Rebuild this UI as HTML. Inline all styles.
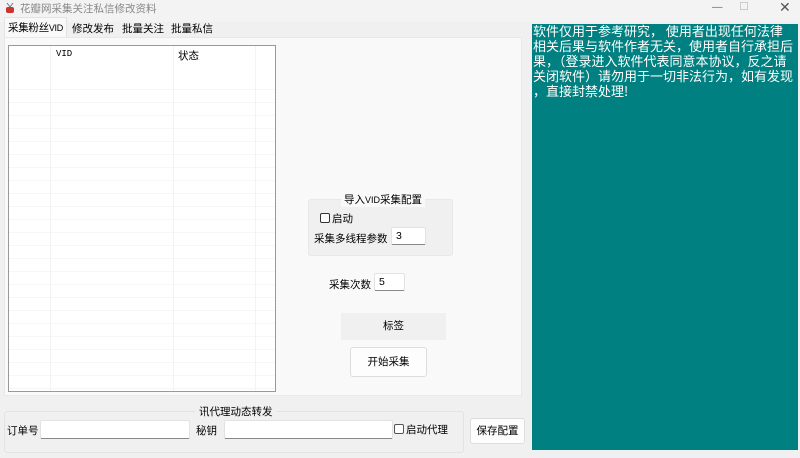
<!DOCTYPE html><html><head><meta charset="utf-8"><style>
*{margin:0;padding:0;box-sizing:border-box}
body{width:800px;height:458px;background:#f0f0f0;position:relative;overflow:hidden;font-family:"Liberation Sans","Noto Sans CJK SC",sans-serif;font-size:10.5px;color:#000}
.a{position:absolute;white-space:nowrap}
.inp{position:absolute;background:#fff;border:1px solid #e2e2e2;border-bottom:1px solid #888;border-radius:2px;padding-left:4px;font-size:10.5px;line-height:16px}
.btn{position:absolute;background:#fdfdfd;border:1px solid #ddd;border-radius:3px;text-align:center}
.cb{display:inline-block;width:10px;height:10px;border:1px solid #333;border-radius:2px;vertical-align:-1px;margin-right:2px;background:#fff}
.t{color:#fff;font-size:13px;line-height:15px;letter-spacing:0;font-family:'Noto Sans CJK SC','WenQuanYi Zen Hei',sans-serif}
</style></head><body>
<div class="a" style="left:0;top:0;width:800px;height:22px;background:#f3f3f3"></div>
<div class="a" style="left:5px;top:2px;width:10px;height:12px"><svg width="10" height="12"><path d="M2 1 L5 5 L8 1" stroke="#777" fill="none"/><rect x="1" y="5" width="8" height="6" rx="2" fill="#c33"/></svg></div>
<div class="a" style="left:20px;top:1px;color:#888;font-size:10.5px">花瓣网采集关注私信修改资料</div>
<div class="a" style="left:712px;top:1px;color:#666">—</div>
<div class="a" style="left:740px;top:2px;width:8px;height:8px;border:1px solid #ccc"></div>
<div class="a" style="left:779px;top:-1px;color:#555;font-size:14px">✕</div>
<div class="a" style="left:4px;top:17px;width:63px;height:21px;background:#f9f9f9;border:1px solid #e3e3e3;border-bottom:none"></div>
<div class="a" style="left:8px;top:20px;letter-spacing:-0.3px">采集粉丝<span style="font-size:9px">VID</span></div>
<div class="a" style="left:72px;top:21px">修改发布</div>
<div class="a" style="left:122px;top:21px">批量关注</div>
<div class="a" style="left:171px;top:21px">批量私信</div>
<div class="a" style="left:4px;top:37px;width:518px;height:359px;background:#f9f9f9;border:1px solid #e8e8e8"></div>
<div class="a" style="left:8px;top:45px;width:268px;height:347px;background:#fff;border:1px solid #999;
background-image:repeating-linear-gradient(to bottom,transparent 0,transparent 12px,#f6f6f6 12px,#f6f6f6 13px);background-position:0 31px;background-repeat:repeat-y"></div>
<div class="a" style="left:9px;top:46px;width:266px;height:30px;background:#fff"></div>
<div class="a" style="left:50px;top:46px;width:1px;height:345px;background:#f3f3f3"></div>
<div class="a" style="left:173px;top:46px;width:1px;height:345px;background:#f3f3f3"></div>
<div class="a" style="left:255px;top:46px;width:1px;height:345px;background:#f3f3f3"></div>
<div class="a" style="left:56px;top:49px;font-size:9px;font-family:'Liberation Mono',monospace">VID</div>
<div class="a" style="left:178px;top:48px">状态</div>
<div class="a" style="left:308px;top:199px;width:145px;height:57px;background:#f0f0f0;border:1px solid #e8e8e8;border-radius:3px"></div>
<div class="a" style="left:341px;top:192px;padding:0 3px;background:#f9f9f9">导入<span style="font-size:9px">VID</span>采集配置</div>
<div class="a" style="left:320px;top:211px"><span class="cb"></span>启动</div>
<div class="a" style="left:314px;top:231px">采集多线程参数</div>
<div class="inp" style="left:391px;top:227px;width:35px;height:18px">3</div>
<div class="a" style="left:329px;top:277px">采集次数</div>
<div class="inp" style="left:374px;top:273px;width:31px;height:18px">5</div>
<div class="a" style="left:341px;top:313px;width:105px;height:27px;background:#f0f0f0;text-align:center;line-height:27px">标签</div>
<div class="btn" style="left:350px;top:347px;width:77px;height:30px;line-height:28px">开始采集</div>
<div class="a" style="left:4px;top:411px;width:460px;height:42px;border:1px solid #e3e3e3;border-radius:3px"></div>
<div class="a" style="left:195px;top:404px;padding:0 4px;background:#f0f0f0">讯代理动态转发</div>
<div class="a" style="left:7px;top:423px">订单号</div>
<div class="inp" style="left:40px;top:420px;width:150px;height:19px"></div>
<div class="a" style="left:196px;top:423px">秘钥</div>
<div class="inp" style="left:224px;top:420px;width:169px;height:19px"></div>
<div class="a" style="left:394px;top:422px"><span class="cb" style="border-color:#555"></span>启动代理</div>
<div class="btn" style="left:470px;top:418px;width:55px;height:26px;line-height:24px">保存配置</div>
<div class="a" style="left:532px;top:24px;width:266px;height:426px;background:#008080;overflow:hidden"></div>
<div class="a t" style="left:533px;top:23px">软件仅用于参考研究， 使用者出现任何法律</div>
<div class="a t" style="left:533px;top:38px">相关后果与软件作者无关，使用者自行承担后</div>
<div class="a t" style="left:533px;top:53px">果，（登录进入软件代表同意本协议，反之请</div>
<div class="a t" style="left:533px;top:68px">关闭软件）请勿用于一切非法行为，如有发现</div>
<div class="a t" style="left:533px;top:83px">，直接封禁处理!</div>
</body></html>
